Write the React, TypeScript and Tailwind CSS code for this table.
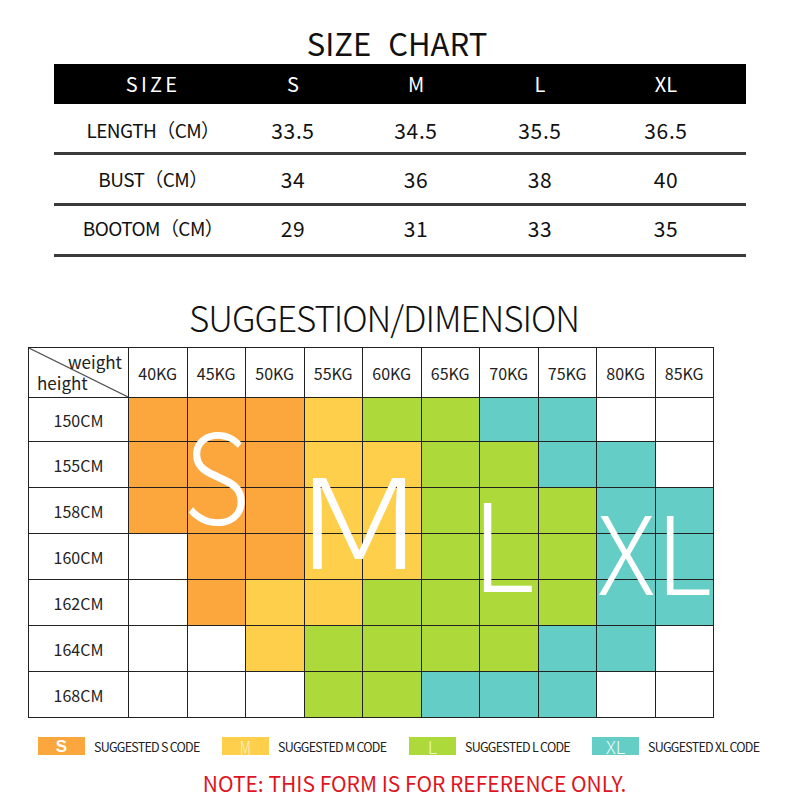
import React from 'react';

const SANS = "font-['Noto_Sans_CJK_SC','Noto_Sans',sans-serif]";

const sizeCols = ['S', 'M', 'L', 'XL'];
const measures = [
  { label: 'LENGTH（CM）', values: ['33.5', '34.5', '35.5', '36.5'] },
  { label: 'BUST（CM）', values: ['34', '36', '38', '40'] },
  { label: 'BOOTOM（CM）', values: ['29', '31', '33', '35'] },
];

const weights = ['40KG', '45KG', '50KG', '55KG', '60KG', '65KG', '70KG', '75KG', '80KG', '85KG'];

// O = S (orange), Y = M (yellow), G = L (green), T = XL (teal), W = empty
const rows: { h: string; cells: string }[] = [
  { h: '150CM', cells: 'OOOYGGTTWW' },
  { h: '155CM', cells: 'OOOYYGGTTW' },
  { h: '158CM', cells: 'OOOYYGGGTT' },
  { h: '160CM', cells: 'WOOYYGGGTT' },
  { h: '162CM', cells: 'WOYYGGGGTT' },
  { h: '164CM', cells: 'WWYGGGGTTW' },
  { h: '168CM', cells: 'WWWGGTTTWW' },
];

const fill: Record<string, string> = {
  O: 'bg-[#fba73e]',
  Y: 'bg-[#fecf4a]',
  G: 'bg-[#aed93a]',
  T: 'bg-[#64cec6]',
  W: 'bg-white',
};

function SizeChart() {
  return (
    <div>
      <div className="h-[64px] flex justify-center items-end pr-[6px]">
        <h1 className={`${SANS} text-[31px] leading-none pb-[6px] text-[#111] flex gap-[17px]`}>
          <span>SIZE</span>
          <span>CHART</span>
        </h1>
      </div>

      <div className="ml-[54px] w-[692px]">
        {/* header bar */}
        <div className="h-[40px] bg-black grid grid-cols-[194px_90px_156px_92px_1fr] items-center text-white">
          <div className={`${SANS} text-center text-[20px] tracking-[0.16em] pl-[4px]`}>SIZE</div>
          {sizeCols.map((s) => (
            <div key={s} className={`${SANS} text-center text-[20px]`}>
              {s}
            </div>
          ))}
        </div>

        {measures.map((m, r) => (
          <div
            key={m.label}
            className={`h-[51px] border-b-[3px] border-[#3a3a3a] grid grid-cols-[194px_90px_156px_92px_1fr] items-center text-[#111] ${
              r === 0 ? 'pt-[5px]' : r === 1 ? 'pt-[1px]' : 'pb-[3px]'
            }`}
          >
            <div className={`${SANS} text-center text-[19px] tracking-[-0.03em] pl-[4px]`}>{m.label}</div>
            {m.values.map((v, i) => (
              <div key={i} className={`${SANS} text-center text-[21px] tracking-[0.03em]`}>
                {v}
              </div>
            ))}
          </div>
        ))}
      </div>
    </div>
  );
}

function Suggestion() {
  return (
    <div>
      <div className="h-[90px] flex justify-center items-end">
        <h2 className={`${SANS} font-light text-[35px] leading-none pb-[13px] text-[#111] tracking-[-0.03em] pr-[32px]`}>
          SUGGESTION/DIMENSION
        </h2>
      </div>

      <div className={`${SANS} relative ml-[28px] w-[686px] border-l border-t border-[#222] text-[#222]`}>
        <div className="grid grid-cols-[100px_repeat(10,1fr)] grid-rows-[50px_44px_repeat(6,46px)]">
          {/* corner */}
          <div className="relative border-r border-b border-[#222]">
            <svg className="absolute inset-0 w-full h-full" preserveAspectRatio="none" viewBox="0 0 100 50">
              <line x1="0" y1="0" x2="100" y2="50" stroke="#555" strokeWidth="1.2" />
            </svg>
            <span className="absolute right-[6px] top-[3px] text-[17px] leading-[22px]">weight</span>
            <span className="absolute left-[8px] bottom-[3px] text-[17px] leading-[22px]">height</span>
          </div>
          {weights.map((w) => (
            <div key={w} className="flex items-center justify-center border-r border-b border-[#222] text-[16px]">
              {w}
            </div>
          ))}

          {rows.map((r) => (
            <React.Fragment key={r.h}>
              <div className="flex items-center justify-center border-r border-b border-[#222] text-[16px]">{r.h}</div>
              {r.cells.split('').map((c, i) => (
                <div key={i} className={`border-r border-b border-[#222] ${fill[c]}`} />
              ))}
            </React.Fragment>
          ))}
        </div>

        {/* big size letters over the grid */}
        <span className="absolute left-[154px] top-[60px] text-[124px] leading-none text-white font-light scale-x-[0.93] origin-left">
          S
        </span>
        <span className="absolute left-[267px] top-[104px] text-[125px] leading-none text-white font-light scale-x-[1.28] origin-left">
          M
        </span>
        <span className="absolute left-[442px] top-[130px] text-[122px] leading-none text-white font-light">L</span>
        <span className="absolute left-[568px] top-[146px] text-[108px] leading-none text-white font-light">XL</span>
      </div>
    </div>
  );
}

function Legend() {
  const items = [
    { tag: 'S', label: 'SUGGESTED S CODE', box: 'bg-[#fba73e]', tagCls: "font-['Liberation_Sans',sans-serif] font-bold text-white text-[17px]" },
    { tag: 'M', label: 'SUGGESTED M CODE', box: 'bg-[#fecf4a]', tagCls: `${SANS} font-light text-[#fff4c4] text-[19px] scale-x-[0.75]` },
    { tag: 'L', label: 'SUGGESTED L CODE', box: 'bg-[#aed93a]', tagCls: `${SANS} font-light text-[#ecf8cc] text-[18px]` },
    { tag: 'XL', label: 'SUGGESTED XL CODE', box: 'bg-[#64cec6]', tagCls: `${SANS} font-light text-[#eafaf8] text-[18px]` },
  ];
  return (
    <div className="mt-[18px] pl-[38px] grid grid-cols-[184px_187px_183px_1fr] items-center">
      {items.map((it) => (
        <div key={it.tag} className="flex items-center">
          <div className={`w-[47px] h-[18px] flex items-center justify-center leading-none ${it.box}`}>
            <span className={it.tagCls}>{it.tag}</span>
          </div>
          <span className={`${SANS} ml-[9px] text-[12.5px] tracking-[-0.06em] text-[#222] whitespace-pre pt-[2px]`}>
            {it.label}
          </span>
        </div>
      ))}
    </div>
  );
}

export default function App() {
  return (
    <div className="w-[800px] h-[800px] bg-white overflow-hidden">
      <SizeChart />
      <Suggestion />
      <Legend />
      <div className="mt-[16px] flex justify-center pl-[29px]">
        <p className={`${SANS} text-[21px] leading-none text-[#e0141e]`}>NOTE: THIS FORM IS FOR REFERENCE ONLY.</p>
      </div>
    </div>
  );
}
